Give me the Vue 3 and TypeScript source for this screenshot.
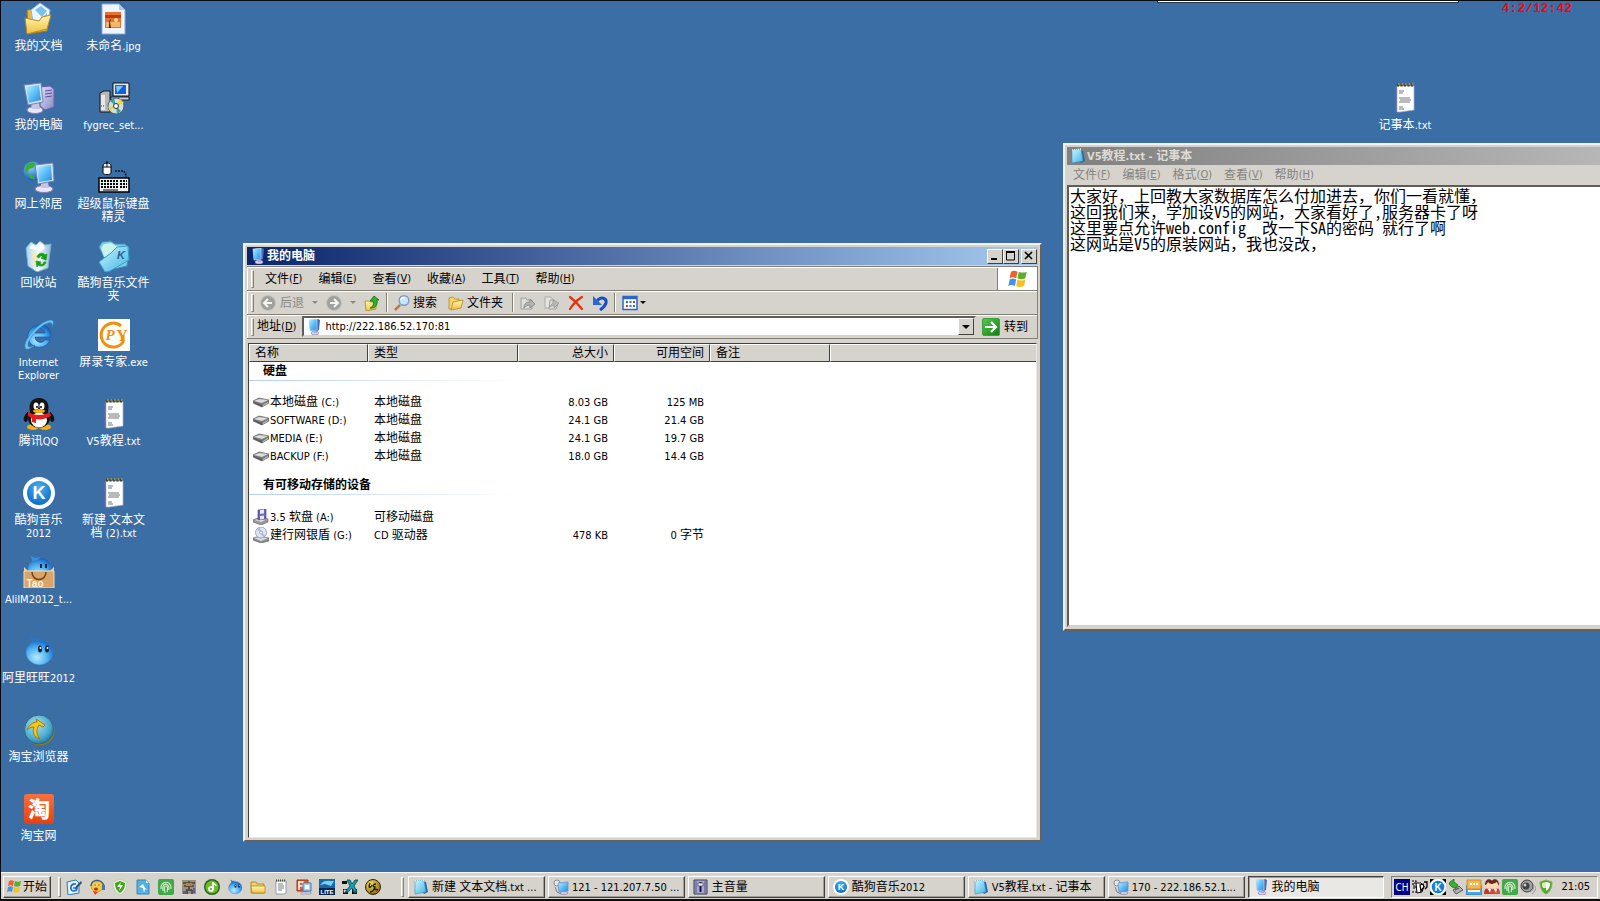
<script setup lang="ts">
import { h, ref, type FunctionalComponent } from 'vue'

interface Shortcut {
  icon: string
  label: string
}

interface Volume {
  icon: string
  name: string
  type: string
  total: string
  free: string
}

interface Group {
  title: string
  rows: Volume[]
}

interface MenuEntry {
  label: string
  key: string
}

interface Task {
  icon: string
  label: string
  active?: boolean
}

interface Letter {
  text: string
  x: number
  y: number
  size: number
  fill: string
  family?: string
  weight?: number
  italic?: boolean
}

// Latin runs are set one pixel smaller than the Chinese text around them.
const Mixed: FunctionalComponent<{ text: string }> = (props) =>
  props.text
    .split(/([\x20-\x7e]+)/)
    .filter((run) => run !== '')
    .map((run) => (/^[\x20-\x7e]+$/.test(run) ? h('span', { class: 'latin' }, run) : run))
Mixed.props = ['text']

const largeIcons = new Set([
  'documents', 'computer', 'network', 'recycle', 'ie', 'qq', 'kugou', 'aliim', 'wangwang',
  'taobrowser', 'taobao', 'picture', 'setup', 'keyboard', 'kfolder', 'recorder', 'text',
])

// Lettering that sits on top of an icon's artwork, in the icon's own units.
const lettering: Record<string, Letter[]> = {
  kugou: [{ text: 'K', x: 16, y: 22, size: 18, fill: '#fff' }],
  aliim: [{ text: 'Tao', x: 12, y: 31, size: 10, fill: '#fff4e0' }],
  taobao: [{ text: '淘', x: 16, y: 24, size: 22, fill: '#fff', family: 'Noto Sans CJK SC, sans-serif', weight: 900 }],
  kfolder: [{ text: 'K', x: 23, y: 19, size: 11, fill: '#286488', italic: true }],
  recorder: [
    { text: 'P', x: 12, y: 21, size: 15, fill: '#f0900c', family: 'Liberation Serif, serif', italic: true },
    { text: 'Y', x: 24, y: 22, size: 16, fill: '#f0900c', family: 'Liberation Serif, serif' },
  ],
  'q-lite': [{ text: 'LITE', x: 8, y: 15, size: 6, fill: '#fff' }],
  't-ch': [{ text: 'CH', x: 8, y: 12, size: 10, fill: '#fff', family: 'DejaVu Sans Condensed, sans-serif', weight: 400 }],
  't-kugou': [{ text: 'K', x: 8, y: 12, size: 10, fill: '#fff' }],
}

const Icon: FunctionalComponent<{ name: string }> = (props) => {
  const side = largeIcons.has(props.name) ? 32 : 16
  return h('svg', { viewBox: `0 0 ${side} ${side}`, 'aria-hidden': 'true' }, [
    h('use', { href: `#i-${props.name}`, width: side, height: side }),
    ...(lettering[props.name] ?? []).map((l) =>
      h(
        'text',
        {
          x: l.x,
          y: l.y,
          fill: l.fill,
          'text-anchor': 'middle',
          'font-size': l.size,
          'font-family': l.family ?? 'Liberation Sans, sans-serif',
          'font-weight': l.weight ?? 700,
          'font-style': l.italic ? 'italic' : 'normal',
        },
        l.text,
      ),
    ),
  ])
}
Icon.props = ['name']

const firstColumn: Shortcut[] = [
  { icon: 'documents', label: '我的文档' },
  { icon: 'computer', label: '我的电脑' },
  { icon: 'network', label: '网上邻居' },
  { icon: 'recycle', label: '回收站' },
  { icon: 'ie', label: 'Internet\nExplorer' },
  { icon: 'qq', label: '腾讯QQ' },
  { icon: 'kugou', label: '酷狗音乐\n2012' },
  { icon: 'aliim', label: 'AliIM2012_t...' },
  { icon: 'wangwang', label: '阿里旺旺2012' },
  { icon: 'taobrowser', label: '淘宝浏览器' },
  { icon: 'taobao', label: '淘宝网' },
]

const secondColumn: Shortcut[] = [
  { icon: 'picture', label: '未命名.jpg' },
  { icon: 'setup', label: 'fygrec_set...' },
  { icon: 'keyboard', label: '超级鼠标键盘\n精灵' },
  { icon: 'kfolder', label: '酷狗音乐文件\n夹' },
  { icon: 'recorder', label: '屏录专家.exe' },
  { icon: 'text', label: 'V5教程.txt' },
  { icon: 'text', label: '新建 文本文\n档 (2).txt' },
]

const explorerMenu: MenuEntry[] = [
  { label: '文件', key: 'F' },
  { label: '编辑', key: 'E' },
  { label: '查看', key: 'V' },
  { label: '收藏', key: 'A' },
  { label: '工具', key: 'T' },
  { label: '帮助', key: 'H' },
]

const notepadMenu: MenuEntry[] = [
  { label: '文件', key: 'F' },
  { label: '编辑', key: 'E' },
  { label: '格式', key: 'O' },
  { label: '查看', key: 'V' },
  { label: '帮助', key: 'H' },
]

const groups: Group[] = [
  {
    title: '硬盘',
    rows: [
      { icon: 'drive', name: '本地磁盘 (C:)', type: '本地磁盘', total: '8.03 GB', free: '125 MB' },
      { icon: 'drive', name: 'SOFTWARE (D:)', type: '本地磁盘', total: '24.1 GB', free: '21.4 GB' },
      { icon: 'drive', name: 'MEDIA (E:)', type: '本地磁盘', total: '24.1 GB', free: '19.7 GB' },
      { icon: 'drive', name: 'BACKUP (F:)', type: '本地磁盘', total: '18.0 GB', free: '14.4 GB' },
    ],
  },
  {
    title: '有可移动存储的设备',
    rows: [
      { icon: 'floppy', name: '3.5 软盘 (A:)', type: '可移动磁盘', total: '', free: '' },
      { icon: 'cd', name: '建行网银盾 (G:)', type: 'CD 驱动器', total: '478 KB', free: '0 字节' },
    ],
  },
]

const quickLaunch: Shortcut[] = [
  { icon: 'q-desktop', label: '显示桌面' },
  { icon: 'q-headset', label: '语音' },
  { icon: 'q-shield', label: '安全卫士' },
  { icon: 'q-bluedoc', label: '文档' },
  { icon: 'q-finger', label: '指纹' },
  { icon: 'q-figure', label: '游戏' },
  { icon: 'q-note', label: '音乐' },
  { icon: 'wangwang', label: '阿里旺旺' },
  { icon: 'q-folder', label: '文件夹' },
  { icon: 'q-text', label: '记事本' },
  { icon: 'q-ppt', label: '演示' },
  { icon: 'q-lite', label: '编辑器' },
  { icon: 'q-x', label: '工具' },
  { icon: 'q-ball', label: '输入' },
]

const tasks: Task[] = [
  { icon: 'notepad', label: '新建 文本文档.txt ...' },
  { icon: 'remote', label: '121 - 121.207.7.50 ...' },
  { icon: 'volume', label: '主音量' },
  { icon: 'kugou', label: '酷狗音乐2012' },
  { icon: 'notepad', label: 'V5教程.txt - 记事本' },
  { icon: 'remote', label: '170 - 222.186.52.1...' },
  { icon: 'monitor', label: '我的电脑', active: true },
]

const tray = ['t-ch', 't-pen', 't-kugou', 't-plug', 't-chat', 't-people', 'q-finger', 't-speaker', 't-shield']

const address = ref('http://222.186.52.170:81')
const note = ref(
  [
    '大家好，上回教大家数据库怎么付加进去，你们一看就懂，',
    '这回我们来，学加设V5的网站，大家看好了,服务器卡了呀',
    '这里要点允许web.config  改一下SA的密码 就行了啊',
    '这网站是V5的原装网站，我也没改，',
  ].join('\n'),
)
</script>

<template>
  <div class="screen">
    <svg class="defs" aria-hidden="true">
      <defs>
        <linearGradient id="g-screen" x1="0" y1="0" x2="1" y2="1">
          <stop offset="0" stop-color="#b8f0ff" /><stop offset=".5" stop-color="#5cc0f8" /><stop offset="1" stop-color="#2f86e0" />
        </linearGradient>
        <linearGradient id="g-lilac" x1="0" y1="0" x2="1" y2="1">
          <stop offset="0" stop-color="#e4e2fa" /><stop offset="1" stop-color="#8b83c8" />
        </linearGradient>
        <linearGradient id="g-yellow" x1="0" y1="0" x2="0" y2="1">
          <stop offset="0" stop-color="#fff6b0" /><stop offset="1" stop-color="#efc040" />
        </linearGradient>
        <linearGradient id="g-cyan" x1="0" y1="0" x2="1" y2="1">
          <stop offset="0" stop-color="#c8f6fc" /><stop offset="1" stop-color="#3fb4e6" />
        </linearGradient>
        <linearGradient id="g-bin" x1="0" y1="0" x2="1" y2="0">
          <stop offset="0" stop-color="#a8d4ee" /><stop offset=".5" stop-color="#f4fafc" /><stop offset="1" stop-color="#94bcd8" />
        </linearGradient>
        <linearGradient id="g-orange" x1="0" y1="0" x2="0" y2="1">
          <stop offset="0" stop-color="#f87040" /><stop offset="1" stop-color="#e8400c" />
        </linearGradient>
        <linearGradient id="g-go" x1="0" y1="0" x2="1" y2="1">
          <stop offset="0" stop-color="#58c850" /><stop offset="1" stop-color="#0c8010" />
        </linearGradient>
        <radialGradient id="g-ball" cx=".4" cy=".7" r=".7">
          <stop offset="0" stop-color="#b4ecff" /><stop offset=".6" stop-color="#4cacee" /><stop offset="1" stop-color="#1766c4" />
        </radialGradient>
        <radialGradient id="g-globe" cx=".4" cy=".3" r=".8">
          <stop offset="0" stop-color="#8cd0ff" /><stop offset="1" stop-color="#0c4cb0" />
        </radialGradient>
        <radialGradient id="g-k" cx=".5" cy=".3" r=".7">
          <stop offset="0" stop-color="#48b4f4" /><stop offset="1" stop-color="#0a6cc8" />
        </radialGradient>
        <radialGradient id="g-teal" cx=".4" cy=".35" r=".7">
          <stop offset="0" stop-color="#a8e4f4" /><stop offset=".7" stop-color="#48a8cc" /><stop offset="1" stop-color="#1c6c94" />
        </radialGradient>
        <radialGradient id="g-gold" cx=".35" cy=".3" r=".8">
          <stop offset="0" stop-color="#f4dc60" /><stop offset="1" stop-color="#806000" />
        </radialGradient>
      </defs>

      <symbol id="i-documents" viewBox="0 0 32 32">
        <path d="M4 7l7-1 3 3 13 2-3 17-19 3z" fill="#e8b840" stroke="#a07818" />
        <path d="M8 7L17 0l10 7-2 14-14 3z" fill="#e8f6ff" stroke="#8cb8d8" />
        <path d="M12 7l6-4 6 5-5 6zM18 16l6-6v9z" fill="#7cc0ec" />
        <path d="M2 15l14 3 3-4 9-2-4 14L4 31z" fill="url(#g-yellow)" stroke="#b88820" />
      </symbol>
      <symbol id="i-computer" viewBox="0 0 32 32">
        <path d="M18 5l9-1 4 3v18l-9 3-5-4z" fill="url(#g-lilac)" stroke="#6860a8" />
        <path d="M22 9l7-1M22 12l7-1M22 15l7-1" stroke="#5c549c" stroke-width="1" /><circle cx="26" cy="21" r="1" fill="#6ae070" />
        <ellipse cx="12" cy="28" rx="8" ry="3.500" fill="#e8e6f8" stroke="#8880b8" />
        <path d="M8 21l8-1 1 7H9z" fill="#c8c4e8" />
        <path d="M1 3l17-2 2 19-15 3z" fill="#d8e4f4" stroke="#6c88b0" />
        <path d="M3 5l13-2 2 15-12 3z" fill="url(#g-screen)" />
      </symbol>
      <symbol id="i-network" viewBox="0 0 32 32">
        <circle cx="10" cy="10" r="9.500" fill="url(#g-globe)" />
        <path d="M3 4c4-4 9-3 10-1l-3 4-4 1-2 4-2-2zM5 13l5 1 2 5-5-2z" fill="#38b038" />
        <ellipse cx="21" cy="28" rx="9" ry="3.500" fill="#e8e6f8" stroke="#8880b8" />
        <path d="M18 21h7l1 6h-8z" fill="#c8c4e8" />
        <path d="M12 4l18-2 1 18-16 3z" fill="#d8e4f4" stroke="#6c88b0" />
        <path d="M14 6l14-2 1 15-13 2z" fill="url(#g-screen)" />
      </symbol>
      <symbol id="i-recycle" viewBox="0 0 32 32">
        <path d="M3 8l5-6 5 3 4-4 5 4 6-1-3 24-11 4-9-6z" fill="url(#g-bin)" stroke="#7cacc8" />
        <path d="M6 8l4-4 4 4 5-5 3 5-4 3-6-1z" fill="#fff" /><path d="M8 11l6 3 4-3-5 15-3-2z" fill="#f8e8a8" opacity=".7" />
        <path d="M14 17c1-4 6-5 8-2l2-1-1 6-5-2 2-1c-2-2-3-1-4 1zM23 22c-1 4-5 5-8 3l-1 2-1-6 5 1-1 2c2 1 3 0 4-2z" fill="#18a018" stroke="#18a018" stroke-width=".8" />
      </symbol>
      <symbol id="i-ie" viewBox="0 0 32 32">
        <path d="M28 18H12c0 6 8 7 10 3h5c-4 11-22 9-22-4C5 3 29 1 28 18zm-6-4c-1-6-9-6-10 0z" fill="url(#g-ball)" stroke="#0c58a8" stroke-width=".6" />
        <path d="M3 30C-3 25 15 2 28 1c4 0 2 6 1 7 1-4-1-5-4-4C16 7 5 20 5 26c0 3 4 2 7 0-3 3-7 5-9 4z" fill="#6cc4f4" stroke="#2878c0" stroke-width=".5" />
      </symbol>
      <symbol id="i-qq" viewBox="0 0 32 32">
        <path d="M5 14c-6 6-4 11-1 9zM27 14c6 6 4 11 1 9z" fill="#101010" stroke="#101010" />
        <ellipse cx="10" cy="29" rx="6" ry="3" fill="#f8b010" /><ellipse cx="22" cy="29" rx="6" ry="3" fill="#f8b010" />
        <ellipse cx="16" cy="20" rx="11" ry="10" fill="#141414" /><ellipse cx="16" cy="22" rx="8" ry="7.500" fill="#fff" />
        <path d="M7 14C5 5 9 0 16 0s11 5 9 14z" fill="#141414" />
        <ellipse cx="13" cy="8" rx="2.500" ry="3.500" fill="#fff" /><ellipse cx="19" cy="8" rx="2.500" ry="3.500" fill="#fff" />
        <circle cx="14" cy="9" r="1" /><circle cx="18" cy="9" r="1" />
        <ellipse cx="16" cy="13" rx="6" ry="2" fill="#f8b010" />
        <path d="M5 14c6 4 16 4 22 0l1 4c-5 3-11 4-15 3v4l-4-1v-4l-4-2z" fill="#e41c1c" />
      </symbol>
      <symbol id="i-kugou" viewBox="0 0 32 32">
        <circle cx="16" cy="16" r="16" fill="#fff" /><circle cx="16" cy="16" r="12" fill="url(#g-k)" />
      </symbol>
      <symbol id="i-aliim" viewBox="0 0 32 32">
        <circle cx="17" cy="14" r="12" fill="url(#g-ball)" /><path d="M9 5L8 0l4 2 6-1-4 3z" fill="#3894e0" />
        <path d="M18 8v4M23 8v4" stroke="#102848" stroke-width="2" />
        <path d="M1 15h30v17H1z" fill="#d8a468" stroke="#f4dcb8" /><path d="M1 11l4 4H1zM31 11l-4 4h4z" fill="#f0d0a0" />
        <path d="M9 16c0 10 14 10 14 0" fill="none" stroke="#704018" stroke-width="1.500" />
      </symbol>
      <symbol id="i-wangwang" viewBox="0 0 32 32">
        <path d="M9 8L7 1l4 3 4-1-1 4 8-1z" fill="#2478d0" /><ellipse cx="16.500" cy="17.500" rx="13.500" ry="12.500" fill="url(#g-ball)" stroke="#3480d0" stroke-width=".6" />
        <ellipse cx="17" cy="14" rx="2" ry="3.500" fill="#0c2444" /><ellipse cx="24" cy="14" rx="2" ry="3.500" fill="#0c2444" />
        <circle cx="17.500" cy="13" r="1" fill="#fff" /><circle cx="24.500" cy="13" r="1" fill="#fff" />
      </symbol>
      <symbol id="i-taobrowser" viewBox="0 0 32 32">
        <circle cx="17" cy="17" r="14.500" fill="#907820" /><circle cx="16" cy="15.500" r="14.500" fill="url(#g-teal)" stroke="#287080" />
        <path d="M4 16C6 11 10 8 14 8l-1-3 9 6-2 2-4-2c-3 5-3 9 1 14-6-2-8-7-6-12-3 0-5 1-7 3z" fill="#f8c818" stroke="#a87808" />
      </symbol>
      <symbol id="i-taobao" viewBox="0 0 32 32">
        <rect x="1" y="1" width="30" height="30" rx="3" fill="url(#g-orange)" />
      </symbol>
      <symbol id="i-picture" viewBox="0 0 32 32">
        <path d="M4 1h17l6 6v24H4z" fill="#f0f6ff" stroke="#90a8d8" /><path d="M21 1l6 6h-6z" fill="#b0c8f0" />
        <path d="M7 9h16v16H7z" fill="#e87030" /><path d="M7 12h16v3H7z" fill="#c03818" /><path d="M8 19h14v5H8z" fill="#f4b868" />
        <path d="M11 25c0-6 0-8 2-9l-1 3 1 6z" fill="#602010" /><circle cx="18" cy="17" r="2" fill="#ffe880" />
      </symbol>
      <symbol id="i-setup" viewBox="0 0 32 32">
        <path d="M15 1h16v13H15z" fill="#e8e8e8" stroke="#101010" /><path d="M17 3h11v9H17z" fill="#1060e0" /><path d="M18 4h7l-6 7z" fill="#78c8ff" />
        <path d="M13 15h18v3H13z" fill="#d0d0d0" stroke="#202020" />
        <path d="M2 11l4-2h6v21H2z" fill="#b8b8b8" stroke="#181818" /><path d="M3 13h4v15H3z" fill="#e8e8e8" /><path d="M3 24h4" stroke="#404040" stroke-dasharray="1 1" />
        <circle cx="18" cy="24" r="8" fill="#d8dce0" stroke="#506060" /><path d="M18 24l4-7 4 4zM18 24l-6 5-2-4z" fill="#e8d848" /><path d="M18 24l-6-5 4-3zM18 24l5 5-4 3z" fill="#28a8a0" />
        <circle cx="18" cy="24" r="2.500" fill="#fff" stroke="#303030" />
      </symbol>
      <symbol id="i-keyboard" viewBox="0 0 32 32">
        <path d="M5 5c0-4 8-4 8 0v7c0 2-8 2-8 0zM9 0v6M5 6h8" fill="#fff" stroke="#000" /><path d="M17 10h9l2 4v3" fill="none" stroke="#101820" stroke-width="1.500" stroke-dasharray="2 1" />
        <path d="M1 17h30v14H1z" fill="#f0f0f0" stroke="#000" stroke-width="1.500" />
        <path d="M3 20h17M3 23h17M3 26h17M22 20h7M22 23h7M22 26h7" stroke="#000" stroke-width="2" stroke-dasharray="2 1" /><path d="M5 29h15" stroke="#000" />
      </symbol>
      <symbol id="i-kfolder" viewBox="0 0 32 32">
        <path d="M1 7l3-5 9-1 4 3h10l4 4-2 18-17 4z" fill="#7ccce4" stroke="#3890b8" /><path d="M3 8l3-4 7-1 5 3 5 1-8 7-9 3z" fill="#c8f4ec" />
        <path d="M1 22l12-9 6-6 11-1 1 14-19 11-5 1z" fill="url(#g-cyan)" stroke="#3c9cc8" />
      </symbol>
      <symbol id="i-recorder" viewBox="0 0 32 32">
        <path d="M0 0h32v32H0z" fill="#fff" /><path d="M23 7A12 12 0 1 0 25 23V16" fill="none" stroke="#f0900c" stroke-width="3" />
      </symbol>
      <symbol id="i-text" viewBox="0 0 32 32">
        <path d="M8 4h17v24l-14 2H8z" fill="#fff" stroke="#b0b4c8" stroke-width=".7" /><path d="M7 5v25" stroke="#7864a8" />
        <path d="M8 3h17" stroke="#504818" stroke-width="3" stroke-dasharray="2 1.500" /><path d="M9 2h16" stroke="#e8c838" stroke-dasharray="1.500 2" />
        <path d="M10 9h5M10 11h4M10 16h11M11 18h11M10 20h11M10 25h4M10 27h5" stroke="#707478" />
      </symbol>

      <symbol id="i-drive" viewBox="0 0 16 16">
        <path d="M0 7l6-3 10 2v3l-7 4-9-4z" fill="#7c7c7c" stroke="#585858" stroke-width=".6" /><path d="M1 7l5-2 9 1-6 3z" fill="#dcdcdc" /><path d="M10 11l5-3v1l-5 3z" fill="#c8c8c8" /><path d="M1 8l8 3v2L1 9z" fill="#585858" />
      </symbol>
      <symbol id="i-floppy" viewBox="0 0 16 16">
        <path d="M0 11l7-3 8 2v3l-7 3-8-3z" fill="#989898" stroke="#606060" stroke-width=".6" /><path d="M2 11l6-2 6 1-6 3z" fill="#e4e4e4" />
        <path d="M5 1l8-1v10l-8 1z" fill="#6c64b4" stroke="#443c84" stroke-width=".6" /><path d="M7 1l4-.5v4l-4 .5zM7 7l4-.5V10l-4 .5z" fill="#e8e8f8" />
      </symbol>
      <symbol id="i-cd" viewBox="0 0 16 16">
        <path d="M0 11l7-2 9 2v3l-8 2-8-3z" fill="#909090" stroke="#585858" stroke-width=".6" /><path d="M1 11l7-1 7 1-7 3z" fill="#dcdcdc" />
        <circle cx="8" cy="5.500" r="5.500" fill="#e0e4f4" stroke="#8088a8" stroke-width=".7" /><path d="M8 5.500L4 2l3-1zM8 5.500l4 3-2 1.500z" fill="#a8b0e0" /><circle cx="8" cy="5.500" r="1.500" fill="#fff" stroke="#7078a0" stroke-width=".6" />
      </symbol>
      <symbol id="i-monitor" viewBox="0 0 16 16">
        <ellipse cx="9" cy="14" rx="4" ry="2" fill="#d4d0ec" stroke="#8078b0" stroke-width=".6" /><path d="M7 11h4v3H8z" fill="#b0a8d8" />
        <path d="M3 1l9-1 2 1-1 10-2 1H4z" fill="#5068b0" /><path d="M3 1l8-1v11l-7 1z" fill="url(#g-screen)" stroke="#d0e4f8" stroke-width=".6" />
      </symbol>
      <symbol id="i-notepad" viewBox="0 0 16 16">
        <path d="M3 2l10 1 2 10-4 2z" fill="#2868a8" /><path d="M2 2l9-1 2 12-11 2z" fill="url(#g-cyan)" stroke="#3888c0" stroke-width=".6" />
        <path d="M2 2l10-1" stroke="#f0f4f8" stroke-width="1.500" stroke-dasharray="1 1" />
      </symbol>
      <symbol id="i-remote" viewBox="0 0 16 16">
        <circle cx="4" cy="4" r="3" fill="#e8e8f0" stroke="#8890a0" /><ellipse cx="11" cy="14" rx="4" ry="1.500" fill="#d4d0ec" stroke="#8078b0" stroke-width=".6" />
        <path d="M5 4l10-1v9l-9 1z" fill="url(#g-screen)" stroke="#7090b8" stroke-width=".8" /><path d="M2 8l2 5 4 2" fill="none" stroke="#7880a0" />
      </symbol>
      <symbol id="i-volume" viewBox="0 0 16 16">
        <path d="M1 1h13v14H1z" fill="#a8a8d0" stroke="#383850" /><path d="M3 2v12M12 2v12" stroke="#505080" /><path d="M7.500 3v10" stroke="#181830" stroke-width="2" /><path d="M5 4h5v3H5z" fill="#f0f0ff" stroke="#303050" stroke-width=".6" />
      </symbol>
      <symbol id="i-flag" viewBox="0 0 16 16">
        <path d="M3 2c2-1 3-1 5 0L7 7C5 6 4 6 2 7z" fill="#f06028" /><path d="M9 2c2 1 4 1 6 0l-1 5c-2 1-4 1-6 0z" fill="#58b030" />
        <path d="M2 8c2-1 3-1 5 0l-1 5c-2-1-3-1-5 0z" fill="#4890e8" /><path d="M8 8c2 1 4 1 6 0l-1 5c-2 1-4 1-6 0z" fill="#f8c020" />
      </symbol>

      <symbol id="i-back" viewBox="0 0 16 16">
        <circle cx="8" cy="8" r="7.500" fill="#a0a09c" stroke="#c4c4c0" /><path d="M8 4L4 8l4 4M4 8h8" fill="none" stroke="#f4f4f0" stroke-width="2" />
      </symbol>
      <symbol id="i-forward" viewBox="0 0 16 16">
        <circle cx="8" cy="8" r="7.500" fill="#a0a09c" stroke="#c4c4c0" /><path d="M8 4l4 4-4 4M12 8H4" fill="none" stroke="#f4f4f0" stroke-width="2" />
      </symbol>
      <symbol id="i-up" viewBox="0 0 16 16">
        <path d="M1 6h4l1 1h6v7L2 16z" fill="url(#g-yellow)" stroke="#b08818" stroke-width=".8" /><path d="M6 13c3-1 4-4 3-7H6l4-5 5 4h-2c1 5-2 9-7 8z" fill="#30b030" stroke="#106010" stroke-width=".7" />
      </symbol>
      <symbol id="i-search" viewBox="0 0 16 16">
        <path d="M1 15l5-5" stroke="#b87848" stroke-width="2.500" /><circle cx="10" cy="5.500" r="4.800" fill="#c4e8fc" stroke="#8098c8" stroke-width="1.400" /><path d="M7 5c0-2 2-3 4-2" fill="none" stroke="#fff" stroke-width="1.500" />
      </symbol>
      <symbol id="i-folders" viewBox="0 0 16 16">
        <path d="M1 3l4-1 2 2h4v3L4 14H1z" fill="#f4d468" stroke="#b88820" stroke-width=".8" /><path d="M5 7l10-2-2 8-10 2z" fill="url(#g-yellow)" stroke="#b88820" stroke-width=".8" />
      </symbol>
      <symbol id="i-moveto" viewBox="0 0 16 16">
        <path d="M1 3h5l1 2h5v9H1z" fill="#dcdcd8" stroke="#a0a09c" /><path d="M4 13c0-4 2-6 6-6V4l5 5-5 4v-3c-3 0-4 1-6 3z" fill="#b4b4b0" stroke="#8c8c88" />
      </symbol>
      <symbol id="i-copyto" viewBox="0 0 16 16">
        <path d="M1 2h5l4 3v8H1z" fill="#e4e4e0" stroke="#acaca8" /><path d="M6 5h4l4 4-2 5H5z" fill="#dcdcd8" stroke="#a0a09c" /><path d="M5 12l4-4V5l6 3-5 5v-3z" fill="#b8b8b4" stroke="#949490" stroke-width=".7" />
      </symbol>
      <symbol id="i-delete" viewBox="0 0 16 16"><path d="M2 2c4 3 8 7 12 12M14 2C9 5 5 9 2 14" fill="none" stroke="#e43010" stroke-width="2.200" stroke-linecap="round" /></symbol>
      <symbol id="i-undo" viewBox="0 0 16 16"><path d="M5 6c4-5 10-3 9 2-1 3-3 5-6 7" fill="none" stroke="#1850c0" stroke-width="3" /><path d="M1 1v9h9z" fill="#2868d8" /></symbol>
      <symbol id="i-views" viewBox="0 0 16 16">
        <path d="M1 1.500h14v13H1z" fill="#fff" stroke="#2868c8" stroke-width="1.500" /><path d="M1 3h14" stroke="#2868c8" stroke-width="2.500" />
        <path d="M4 7h9M4 11h9" stroke="#3070c0" stroke-width="2" stroke-dasharray="2 1.500" /><path d="M4 11h2M11 7h2" stroke="#c04020" stroke-width="2" />
      </symbol>
      <symbol id="i-go" viewBox="0 0 18 18">
        <rect x=".5" y=".5" width="17" height="17" rx="1.500" fill="url(#g-go)" stroke="#40a040" /><path d="M3 9h11M9 4l5 5-5 5" fill="none" stroke="#fff" stroke-width="2.200" />
      </symbol>

      <symbol id="i-q-desktop" viewBox="0 0 16 16">
        <path d="M1 3l9-2 3 3v10l-11 2z" fill="#e4f4ff" stroke="#2878c0" /><path d="M10 5C4 4 3 12 8 12c2 0 3-1 3-3H7" fill="none" stroke="#2070c8" stroke-width="1.700" /><path d="M10 7l5-5 1 2-5 5-2 1z" fill="#385068" />
      </symbol>
      <symbol id="i-q-headset" viewBox="0 0 16 16">
        <circle cx="8" cy="7" r="6" fill="#f8c828" stroke="#c08010" stroke-width=".6" /><path d="M2 7C2 0 14-1 15 8" fill="none" stroke="#3060a0" stroke-width="1.500" /><path d="M13 6h3v5h-3z" fill="#4078c0" />
        <circle cx="6" cy="6" r="1.300" fill="#fff" /><circle cx="6" cy="6" r=".7" /><circle cx="10" cy="6" r="1.300" fill="#fff" /><circle cx="10" cy="6" r=".7" /><ellipse cx="7" cy="10" rx="2" ry="1.500" fill="#c02818" /><path d="M4 12l5 1-3 3z" fill="#e84020" />
      </symbol>
      <symbol id="i-q-shield" viewBox="0 0 16 16">
        <path d="M8 0l7 3c0 7-2 11-7 13C3 14 1 10 1 3z" fill="#e4f0dc" stroke="#a8c098" stroke-width=".6" /><path d="M8 2l5 2c0 5-2 8-5 10C5 12 3 9 3 4z" fill="#48a020" /><path d="M9 3L5 8h3l-1 4 4-6H8z" fill="#fff" />
      </symbol>
      <symbol id="i-q-bluedoc" viewBox="0 0 16 16">
        <path d="M2 1h9l3 3v11H2z" fill="#58b0dc" stroke="#3888b8" /><path d="M11 1v3h3" fill="#d0ecf8" /><path d="M4 8l4-3 2 4 3 2-3-1-1 4-1-5z" fill="#f0fcff" />
      </symbol>
      <symbol id="i-q-finger" viewBox="0 0 16 16">
        <rect width="16" height="16" rx="2" fill="#40a848" /><path d="M3 10C2 1 14 1 13 10M5 12C3 3 12 3 11 11M7 14c-1-5-1-7 1-7s2 3 1 6" fill="none" stroke="#d8f4d0" stroke-width="1.100" />
      </symbol>
      <symbol id="i-q-figure" viewBox="0 0 16 16">
        <path d="M1 1h14v14H1z" fill="#989078" /><path d="M2 4h12M3 7h10M5 11h6M8 2v9M6 15v-4M11 15v-4" stroke="#484048" stroke-width="1.500" /><path d="M5 4h6v3H5z" fill="#c08030" /><path d="M2 12h3v3H2zM12 9h2v5h-2z" fill="#5860a0" />
      </symbol>
      <symbol id="i-q-note" viewBox="0 0 16 16">
        <circle cx="8" cy="8" r="8" fill="#286818" /><circle cx="8" cy="8" r="6.500" fill="#70b830" /><circle cx="7" cy="10" r="2" fill="none" stroke="#fff" stroke-width="1.700" /><path d="M9 10V3c0 2 3 2 3 4" fill="none" stroke="#fff" stroke-width="1.500" />
      </symbol>
      <symbol id="i-q-folder" viewBox="0 0 16 16">
        <path d="M1 3h5l1 2h7v9H1z" fill="#f0d068" stroke="#a88020" stroke-width=".8" /><path d="M1 7h14v7H2z" fill="url(#g-yellow)" stroke="#b08820" stroke-width=".8" />
      </symbol>
      <symbol id="i-q-text" viewBox="0 0 16 16">
        <path d="M3 2h10v12l-2 1H3z" fill="#fff" stroke="#8088a0" stroke-width=".8" /><path d="M3 1.500h10" stroke="#505048" stroke-width="2" stroke-dasharray="1 1" /><path d="M5 5h5M5 7h6M5 9h6M5 11h4" stroke="#787c88" />
      </symbol>
      <symbol id="i-q-ppt" viewBox="0 0 16 16">
        <path d="M1 1h11v11H1z" fill="#e85828" stroke="#a03010" /><path d="M3 11V3h4v4H3" fill="none" stroke="#fff" stroke-width="1.500" /><path d="M7 4h8v8H7z" fill="#a8d4f4" stroke="#4878a8" /><path d="M9 6h4v4H9z" fill="#fff" /><path d="M5 13h10v2H5z" fill="#d8d8e0" stroke="#8088a0" stroke-width=".6" />
      </symbol>
      <symbol id="i-q-lite" viewBox="0 0 16 16">
        <path d="M0 0h16v16H0z" fill="#1868a8" /><path d="M1 6c4-6 9-4 14-4l-3 5-6-2z" fill="#78d0f4" /><path d="M0 9h16v7H0z" fill="#082850" />
      </symbol>
      <symbol id="i-q-x" viewBox="0 0 16 16">
        <path d="M0 2h5v3H0zM1 10h5v5H1zM10 10h5v5h-5z" fill="#101010" /><circle cx="3" cy="12" r="1.500" fill="#e8e8e8" /><circle cx="13" cy="12" r="1.500" fill="#e8e8e8" /><path d="M5 1h3l2 4 3-4h3l-4 6 3 6h-3l-2-4-4 4H3l5-6z" fill="#18a0b0" stroke="#084048" stroke-width=".8" />
      </symbol>
      <symbol id="i-q-ball" viewBox="0 0 16 16">
        <circle cx="8" cy="8" r="7.500" fill="url(#g-gold)" stroke="#302400" /><path d="M5 4c-2 5 0 6 2 2M11 5c-3 0-4 3-1 3-1 3-3 5-5 5M9 10l4 1" fill="none" stroke="#201800" stroke-width="1.300" />
      </symbol>

      <symbol id="i-t-ch" viewBox="0 0 16 16"><path d="M0 0h16v16H0z" fill="#000084" /></symbol>
      <symbol id="i-t-pen" viewBox="0 0 16 16">
        <path d="M0 2h4v2H1v3h3v2H0M0 13h5" fill="none" stroke="#000" stroke-width="1.200" stroke-dasharray="2 1" /><path d="M4 4h5l3 3-2 6-5 1z" fill="#fff" stroke="#000" /><path d="M8 6l3-1 1 3-3 4zM12 3h3v5l-2 2" fill="none" stroke="#000" stroke-width="1.300" />
      </symbol>
      <symbol id="i-t-kugou" viewBox="0 0 16 16">
        <path d="M0 0h4L0 4zM16 0v4l-4-4zM0 12l4 4H0zM16 12v4h-4z" fill="#000" /><circle cx="8" cy="8" r="8" fill="#fff" /><circle cx="8" cy="8" r="6.300" fill="#1080d8" />
      </symbol>
      <symbol id="i-t-plug" viewBox="0 0 16 16">
        <path d="M2 3l4-3v3l4 3-3 3-3-1-3-3z" fill="#38b030" stroke="#186818" stroke-width=".7" /><path d="M5 11l6-4 4 4-7 4z" fill="#b0b0b0" stroke="#585858" /><path d="M7 11l4-2" stroke="#404040" />
      </symbol>
      <symbol id="i-t-chat" viewBox="0 0 16 16">
        <path d="M0 7h16v9H0z" fill="#50a8d8" stroke="#3080b0" /><path d="M1 1h14v9H1z" fill="#f4b850" stroke="#c88020" stroke-width=".8" /><path d="M2 12h12" stroke="#e8f4ff" stroke-width="2" /><path d="M4 5h8" stroke="#fff" stroke-width="2" stroke-dasharray="2 1" />
      </symbol>
      <symbol id="i-t-people" viewBox="0 0 16 16">
        <path d="M0 15c0-5 2-6 5-6s4 2 4 6z" fill="#c03828" /><path d="M7 15c0-5 2-6 5-6s4 2 4 6z" fill="#d84838" /><circle cx="5" cy="6" r="4" fill="#f8d8b8" /><circle cx="11" cy="6" r="4" fill="#f8d8b8" /><path d="M1 6c0-8 8-7 8-1-3 0-4-1-5-2-1 2-2 3-3 3zM7 5c0-7 9-6 8 2l-2-4c-2 1-4 2-6 2z" fill="#702818" /><path d="M4 10l2 4 1-4zM10 10l2 4 1-4z" fill="#fff" />
      </symbol>
      <symbol id="i-t-speaker" viewBox="0 0 16 16">
        <circle cx="7" cy="7" r="6" fill="#a0a0a0" stroke="#404040" /><circle cx="6" cy="7" r="3.500" fill="#404040" /><circle cx="5" cy="6" r="1.500" fill="#c8c8c8" /><path d="M10 13c3-1 4-4 4-7M12 15c3-2 4-5 4-8" fill="none" stroke="#9090c0" />
      </symbol>
      <symbol id="i-t-shield" viewBox="0 0 16 16">
        <path d="M8 1l6 2c0 6-2 10-6 12C4 13 2 9 2 3z" fill="#58a828" stroke="#88b060" /><path d="M8 3l4 1c0 4-1 6-4 8z" fill="#fff" /><path d="M8 3L4 4c0 2 0 4 1 5h3z" fill="#d8f0b0" />
      </symbol>
    </svg>

    <main class="desktop">
      <nav class="shortcuts" aria-label="桌面">
        <div v-for="(column, c) in [firstColumn, secondColumn]" :key="c" class="column">
          <button v-for="item in column" :key="item.label" type="button" class="shortcut">
            <Icon class="icon32" :name="item.icon" />
            <span class="caption"><Mixed :text="item.label" /></span>
          </button>
        </div>
      </nav>

      <button type="button" class="shortcut loose">
        <Icon class="icon32" name="text" />
        <span class="caption"><Mixed text="记事本.txt" /></span>
      </button>

      <div class="docked-bar"></div>
      <p class="counter">4:2/12:42</p>

      <section class="window notepad" aria-label="V5教程.txt - 记事本">
        <header class="title inactive">
          <Icon class="icon16" name="notepad" />
          <h2><Mixed text="V5教程.txt - 记事本" /></h2>
        </header>
        <nav class="note-menu">
          <button v-for="m in notepadMenu" :key="m.key" type="button">{{ m.label }}<span class="latin">(<u>{{ m.key }}</u>)</span></button>
        </nav>
        <textarea v-model="note" class="note" aria-label="文本" spellcheck="false" wrap="off"></textarea>
      </section>

      <section class="window explorer" aria-label="我的电脑">
        <header class="title">
          <Icon class="icon16" name="monitor" />
          <h2>我的电脑</h2>
          <div class="controls">
            <button type="button" aria-label="最小化"><svg viewBox="0 0 12 10"><path d="M2 8h6" stroke="#000" stroke-width="2" /></svg></button>
            <button type="button" aria-label="最大化"><svg viewBox="0 0 12 10"><path d="M1.500 1v8h8V1M1 1h9" fill="none" stroke="#000" /><path d="M1 1h9" stroke="#000" stroke-width="2" /></svg></button>
            <button type="button" aria-label="关闭" class="close"><svg viewBox="0 0 12 10"><path d="M2 1l7 7M9 1L2 8" stroke="#000" stroke-width="1.600" /></svg></button>
          </div>
        </header>

        <div class="rebar">
          <nav class="band menu-band">
            <span class="gripper"></span>
            <button v-for="m in explorerMenu" :key="m.key" type="button">{{ m.label }}<span class="latin">(<u>{{ m.key }}</u>)</span></button>
            <span class="brand"><Icon class="brand-flag" name="flag" /></span>
          </nav>
          <div class="band tool-band">
            <span class="gripper"></span>
            <div class="tools">
              <button type="button" disabled><Icon class="icon16" name="back" />后退</button>
              <button type="button" disabled aria-label="后退列表"><span class="caret"></span></button>
              <button type="button" disabled aria-label="前进"><Icon class="icon16" name="forward" /></button>
              <button type="button" disabled aria-label="前进列表"><span class="caret"></span></button>
              <button type="button" aria-label="向上"><Icon class="icon16" name="up" /></button>
              <span class="divider"></span>
              <button type="button" class="wide"><Icon class="icon16" name="search" />搜索</button>
              <button type="button" class="wide"><Icon class="icon16" name="folders" />文件夹</button>
              <span class="divider"></span>
              <button type="button" disabled aria-label="移至"><Icon class="icon16" name="moveto" /></button>
              <button type="button" disabled aria-label="复制到"><Icon class="icon16" name="copyto" /></button>
              <button type="button" aria-label="删除"><Icon class="icon16" name="delete" /></button>
              <button type="button" aria-label="撤消"><Icon class="icon16" name="undo" /></button>
              <span class="divider"></span>
              <button type="button" class="views" aria-label="查看方式"><Icon class="icon16" name="views" /><span class="caret"></span></button>
            </div>
          </div>
          <div class="band address-band">
            <span class="gripper"></span>
            <label for="address">地址<span class="latin">(<u>D</u>)</span></label>
            <div class="combo">
              <Icon class="icon16" name="monitor" />
              <input id="address" v-model="address" type="text" spellcheck="false" />
              <button type="button" aria-label="地址列表"><span class="caret"></span></button>
            </div>
            <button type="button" class="go"><Icon class="icon18" name="go" />转到</button>
          </div>
        </div>

        <div class="list">
          <table>
            <colgroup>
              <col class="w-name" /><col class="w-type" /><col class="w-size" /><col class="w-size" /><col class="w-note" /><col />
            </colgroup>
            <thead>
              <tr>
                <th>名称</th><th>类型</th><th class="num">总大小</th><th class="num">可用空间</th><th>备注</th><th></th>
              </tr>
            </thead>
            <tbody v-for="g in groups" :key="g.title">
              <tr class="group"><th colspan="6" scope="rowgroup"><span>{{ g.title }}</span></th></tr>
              <tr v-for="v in g.rows" :key="v.name">
                <td class="name"><div class="name-cell"><Icon class="icon16" :name="v.icon" /><span><Mixed :text="v.name" /></span></div></td>
                <td><Mixed :text="v.type" /></td>
                <td class="num"><Mixed :text="v.total" /></td>
                <td class="num"><Mixed :text="v.free" /></td>
                <td></td>
                <td></td>
              </tr>
            </tbody>
          </table>
        </div>
      </section>
    </main>

    <footer class="taskbar">
      <button type="button" class="start"><Icon class="icon16" name="flag" />开始</button>
      <span class="rail"></span>
      <nav class="quick" aria-label="快速启动">
        <button v-for="q in quickLaunch" :key="q.icon" type="button" :aria-label="q.label"><Icon class="icon16" :name="q.icon" /></button>
      </nav>
      <span class="rail"></span>
      <nav class="tasks" aria-label="任务">
        <button v-for="t in tasks" :key="t.label" type="button" class="task" :class="{ active: t.active }">
          <Icon class="icon16" :name="t.icon" /><span><Mixed :text="t.label" /></span>
        </button>
      </nav>
      <div class="tray">
        <Icon v-for="t in tray" :key="t" class="icon16" :name="t" />
        <time>21:05</time>
      </div>
    </footer>
  </div>
</template>

<style>
html,
body {
  margin: 0;
  background: #0c0c14;
}

.latin {
  font-size: 11px;
}
</style>

<style scoped>
.screen {
  --face: #d6d2cc;
  --light: #fff;
  --shade: #848078;
  --dark: #44403c;
  box-sizing: border-box;
  display: flex;
  flex-direction: column;
  height: 100vh;
  padding: 1px 0 2px 1px;
  overflow: hidden;
  font: 12px/14px "DejaVu Sans Condensed", "Noto Sans CJK SC", sans-serif;
  color: #000;
}

.defs {
  position: absolute;
  width: 0;
  height: 0;
}

button {
  display: flex;
  align-items: center;
  padding: 0;
  border: 0;
  background: none;
  color: inherit;
  font: inherit;
  white-space: nowrap;
}

h2,
p {
  margin: 0;
}

svg {
  flex: none;
  display: block;
}

.icon32 {
  width: 32px;
  height: 32px;
}

.icon16 {
  width: 16px;
  height: 16px;
}

.icon18 {
  width: 18px;
  height: 18px;
}

.desktop {
  position: relative;
  flex: 1;
  min-height: 0;
  overflow: hidden;
  background: #3a6ea5;
}

.shortcuts {
  display: flex;
  padding-top: 2px;
}

.column {
  display: grid;
  grid-auto-rows: 79px;
  width: 75px;
  align-content: start;
}

.shortcut {
  flex-direction: column;
  gap: 5px;
  color: #fff;
}

.caption {
  line-height: 13px;
  text-align: center;
  white-space: pre;
}

.loose {
  position: absolute;
  top: 81px;
  left: 1366px;
  width: 76px;
}

.docked-bar {
  position: absolute;
  top: 0;
  left: 1156px;
  width: 300px;
  height: 1px;
  border: 1px solid #283848;
  border-top: 0;
  background: #fff;
}

.counter {
  position: absolute;
  top: 1px;
  right: 28px;
  color: #f00814;
  font: bold 13px/14px "Liberation Mono", monospace;
}

.window {
  position: absolute;
  box-sizing: border-box;
  display: flex;
  flex-direction: column;
  padding: 2px;
  border: 2px solid;
  border-color: #f4f2f0 #66625c #66625c #f4f2f0;
  background: var(--face);
}

.explorer {
  top: 242px;
  left: 242px;
  width: 799px;
  height: 599px;
}

.notepad {
  top: 142px;
  left: 1062px;
  right: -100px;
  height: 488px;
}

.title {
  display: flex;
  align-items: center;
  height: 18px;
  padding: 0 1px 0 3px;
  background: linear-gradient(to right, #0a246a, #a6caf0);
  color: #fff;
}

.title.inactive {
  background: linear-gradient(to right, #808080, #c0c0c0);
  color: #dedad4;
}

.title h2 {
  flex: 1;
  padding-left: 1px;
  font-size: 12px;
  line-height: 16px;
}

.controls {
  display: flex;
}

.controls button {
  box-sizing: border-box;
  justify-content: center;
  width: 16px;
  height: 15px;
  border: 1px solid;
  border-color: var(--light) var(--dark) var(--dark) var(--light);
  background: var(--face);
}

.controls svg {
  width: 12px;
  height: 10px;
}

.controls .close {
  margin-left: 2px;
}

.note-menu {
  display: flex;
  height: 20px;
  color: #858380;
}

.note-menu button {
  padding: 0 6px;
}

.note {
  flex: 1;
  box-sizing: border-box;
  margin: 0;
  padding: 0 1px;
  border: 2px solid;
  border-color: #605c58 var(--face) var(--face) #605c58;
  outline: 0;
  resize: none;
  overflow: hidden;
  background: #fff;
  color: #000;
  font: 16px/16px "Noto Sans Mono CJK SC", "Liberation Mono", "Noto Sans CJK SC", monospace;
}

.rebar {
  margin-top: 1px;
  border-bottom: 1px solid var(--shade);
}

.band {
  display: flex;
  align-items: center;
  box-sizing: border-box;
  height: 24px;
  padding-left: 4px;
  border: 1px solid var(--shade);
  border-width: 1px 1px 0 0;
  box-shadow: inset 1px 1px var(--light);
}

.gripper {
  box-sizing: border-box;
  flex: none;
  width: 3px;
  height: 18px;
  border: 1px solid;
  border-color: var(--light) var(--shade) var(--shade) var(--light);
}

.menu-band button {
  padding: 0 8px;
}

.menu-band .gripper {
  margin-right: 3px;
}

.brand {
  display: flex;
  align-items: center;
  justify-content: center;
  align-self: stretch;
  width: 39px;
  margin: 1px 0 0 auto;
  border-left: 1px solid var(--shade);
  background: #fff;
}

.brand-flag {
  width: 21px;
  height: 21px;
}

.tools {
  display: flex;
  align-items: center;
  gap: 8px;
  margin-left: 6px;
}

.tools button {
  gap: 4px;
}

.tools button:disabled {
  color: #8c8984;
}

.tools .wide {
  gap: 3px;
  padding-right: 3px;
}

.tools .views {
  gap: 2px;
}

.divider {
  width: 1px;
  height: 19px;
  margin: 0 -2px;
  border-right: 1px solid var(--light);
  background: var(--shade);
}

.caret {
  width: 0;
  border: 3px solid transparent;
  border-top-color: currentColor;
  border-bottom: 0;
}

.address-band {
  gap: 6px;
}

.address-band label {
  margin-left: -3px;
  white-space: nowrap;
}

.combo {
  display: flex;
  flex: 1;
  align-items: center;
  box-sizing: border-box;
  height: 21px;
  padding-left: 2px;
  border: 2px solid;
  border-color: #605c58 var(--face) var(--face) #605c58;
  background: #fff;
}

.combo input {
  flex: 1;
  min-width: 0;
  padding: 0 3px;
  border: 0;
  outline: 0;
  background: none;
  font: 11px/14px "DejaVu Sans Condensed", "Noto Sans CJK SC", sans-serif;
}

.combo button {
  box-sizing: border-box;
  justify-content: center;
  width: 16px;
  height: 17px;
  border: 1px solid;
  border-color: var(--light) var(--dark) var(--dark) var(--light);
  background: var(--face);
}

.combo .caret {
  border-width: 4px 4px 0;
}

.go {
  gap: 4px;
  padding-right: 9px;
}

.list {
  flex: 1;
  margin: 4px 1px 0;
  border: 1px solid;
  border-color: var(--dark) #e8e6e2 #e8e6e2 var(--dark);
  overflow: hidden;
  background: #fff;
}

table {
  width: 100%;
  table-layout: fixed;
  border-collapse: separate;
  border-spacing: 0;
}

.w-name {
  width: 119px;
}

.w-type {
  width: 150px;
}

.w-size {
  width: 96px;
}

.w-note {
  width: 120px;
}

th,
td {
  box-sizing: border-box;
  height: 18px;
  padding: 0 6px;
  line-height: 16px;
  text-align: left;
  font-weight: 400;
  white-space: nowrap;
}

thead th {
  padding: 0 5px;
  border: 1px solid;
  border-color: var(--light) var(--dark) var(--dark) var(--light);
  background: var(--face);
}

thead th:last-child {
  border-right: 0;
}

th.num,
td.num {
  text-align: right;
}

.name {
  padding: 0 0 0 4px;
}

.name-cell {
  display: flex;
  align-items: center;
  gap: 1px;
}

.group th {
  height: 31px;
  padding: 1px 0 12px;
}

.group span {
  display: block;
  padding-left: 14px;
  border-bottom: 1px solid;
  border-image: linear-gradient(to right, #b4d0f0, #fff 270px) 1;
  font-weight: 700;
  line-height: 17px;
}

tbody + tbody .group th {
  padding: 12px 0 13px;
}

.taskbar {
  display: flex;
  align-items: center;
  box-sizing: border-box;
  height: 27px;
  padding: 2px 2px 0;
  border-top: 1px solid #f8f6f4;
  background: var(--face);
}

.start,
.task {
  box-sizing: border-box;
  height: 22px;
  border: 1px solid;
  border-color: var(--light) var(--dark) var(--dark) var(--light);
  box-shadow: inset -1px -1px #a09c96;
}

.start {
  gap: 1px;
  padding: 0 3px 0 2px;
}

.rail {
  box-sizing: border-box;
  width: 3px;
  height: 20px;
  margin-left: 7px;
  border: 1px solid;
  border-color: var(--light) var(--shade) var(--shade) var(--light);
}

.quick {
  display: flex;
  gap: 7px;
  margin: 0 13px 0 5px;
}

.tasks {
  display: flex;
  flex: 1;
  gap: 3px;
  min-width: 0;
  margin: 0 7px 0 4px;
}

.task {
  flex: 1 1 0;
  gap: 3px;
  min-width: 0;
  padding: 0 4px;
  overflow: hidden;
}

.task.active {
  border-color: var(--dark) var(--light) var(--light) var(--dark);
  box-shadow: inset 1px 1px #a09c96;
  background: #eae8e4;
}

.tray {
  display: flex;
  align-items: center;
  gap: 2px;
  box-sizing: border-box;
  height: 22px;
  padding: 0 7px 0 2px;
  border: 1px solid;
  border-color: var(--shade) var(--light) var(--light) var(--shade);
}

.tray time {
  margin-left: 5px;
  font-size: 11px;
}
</style>
